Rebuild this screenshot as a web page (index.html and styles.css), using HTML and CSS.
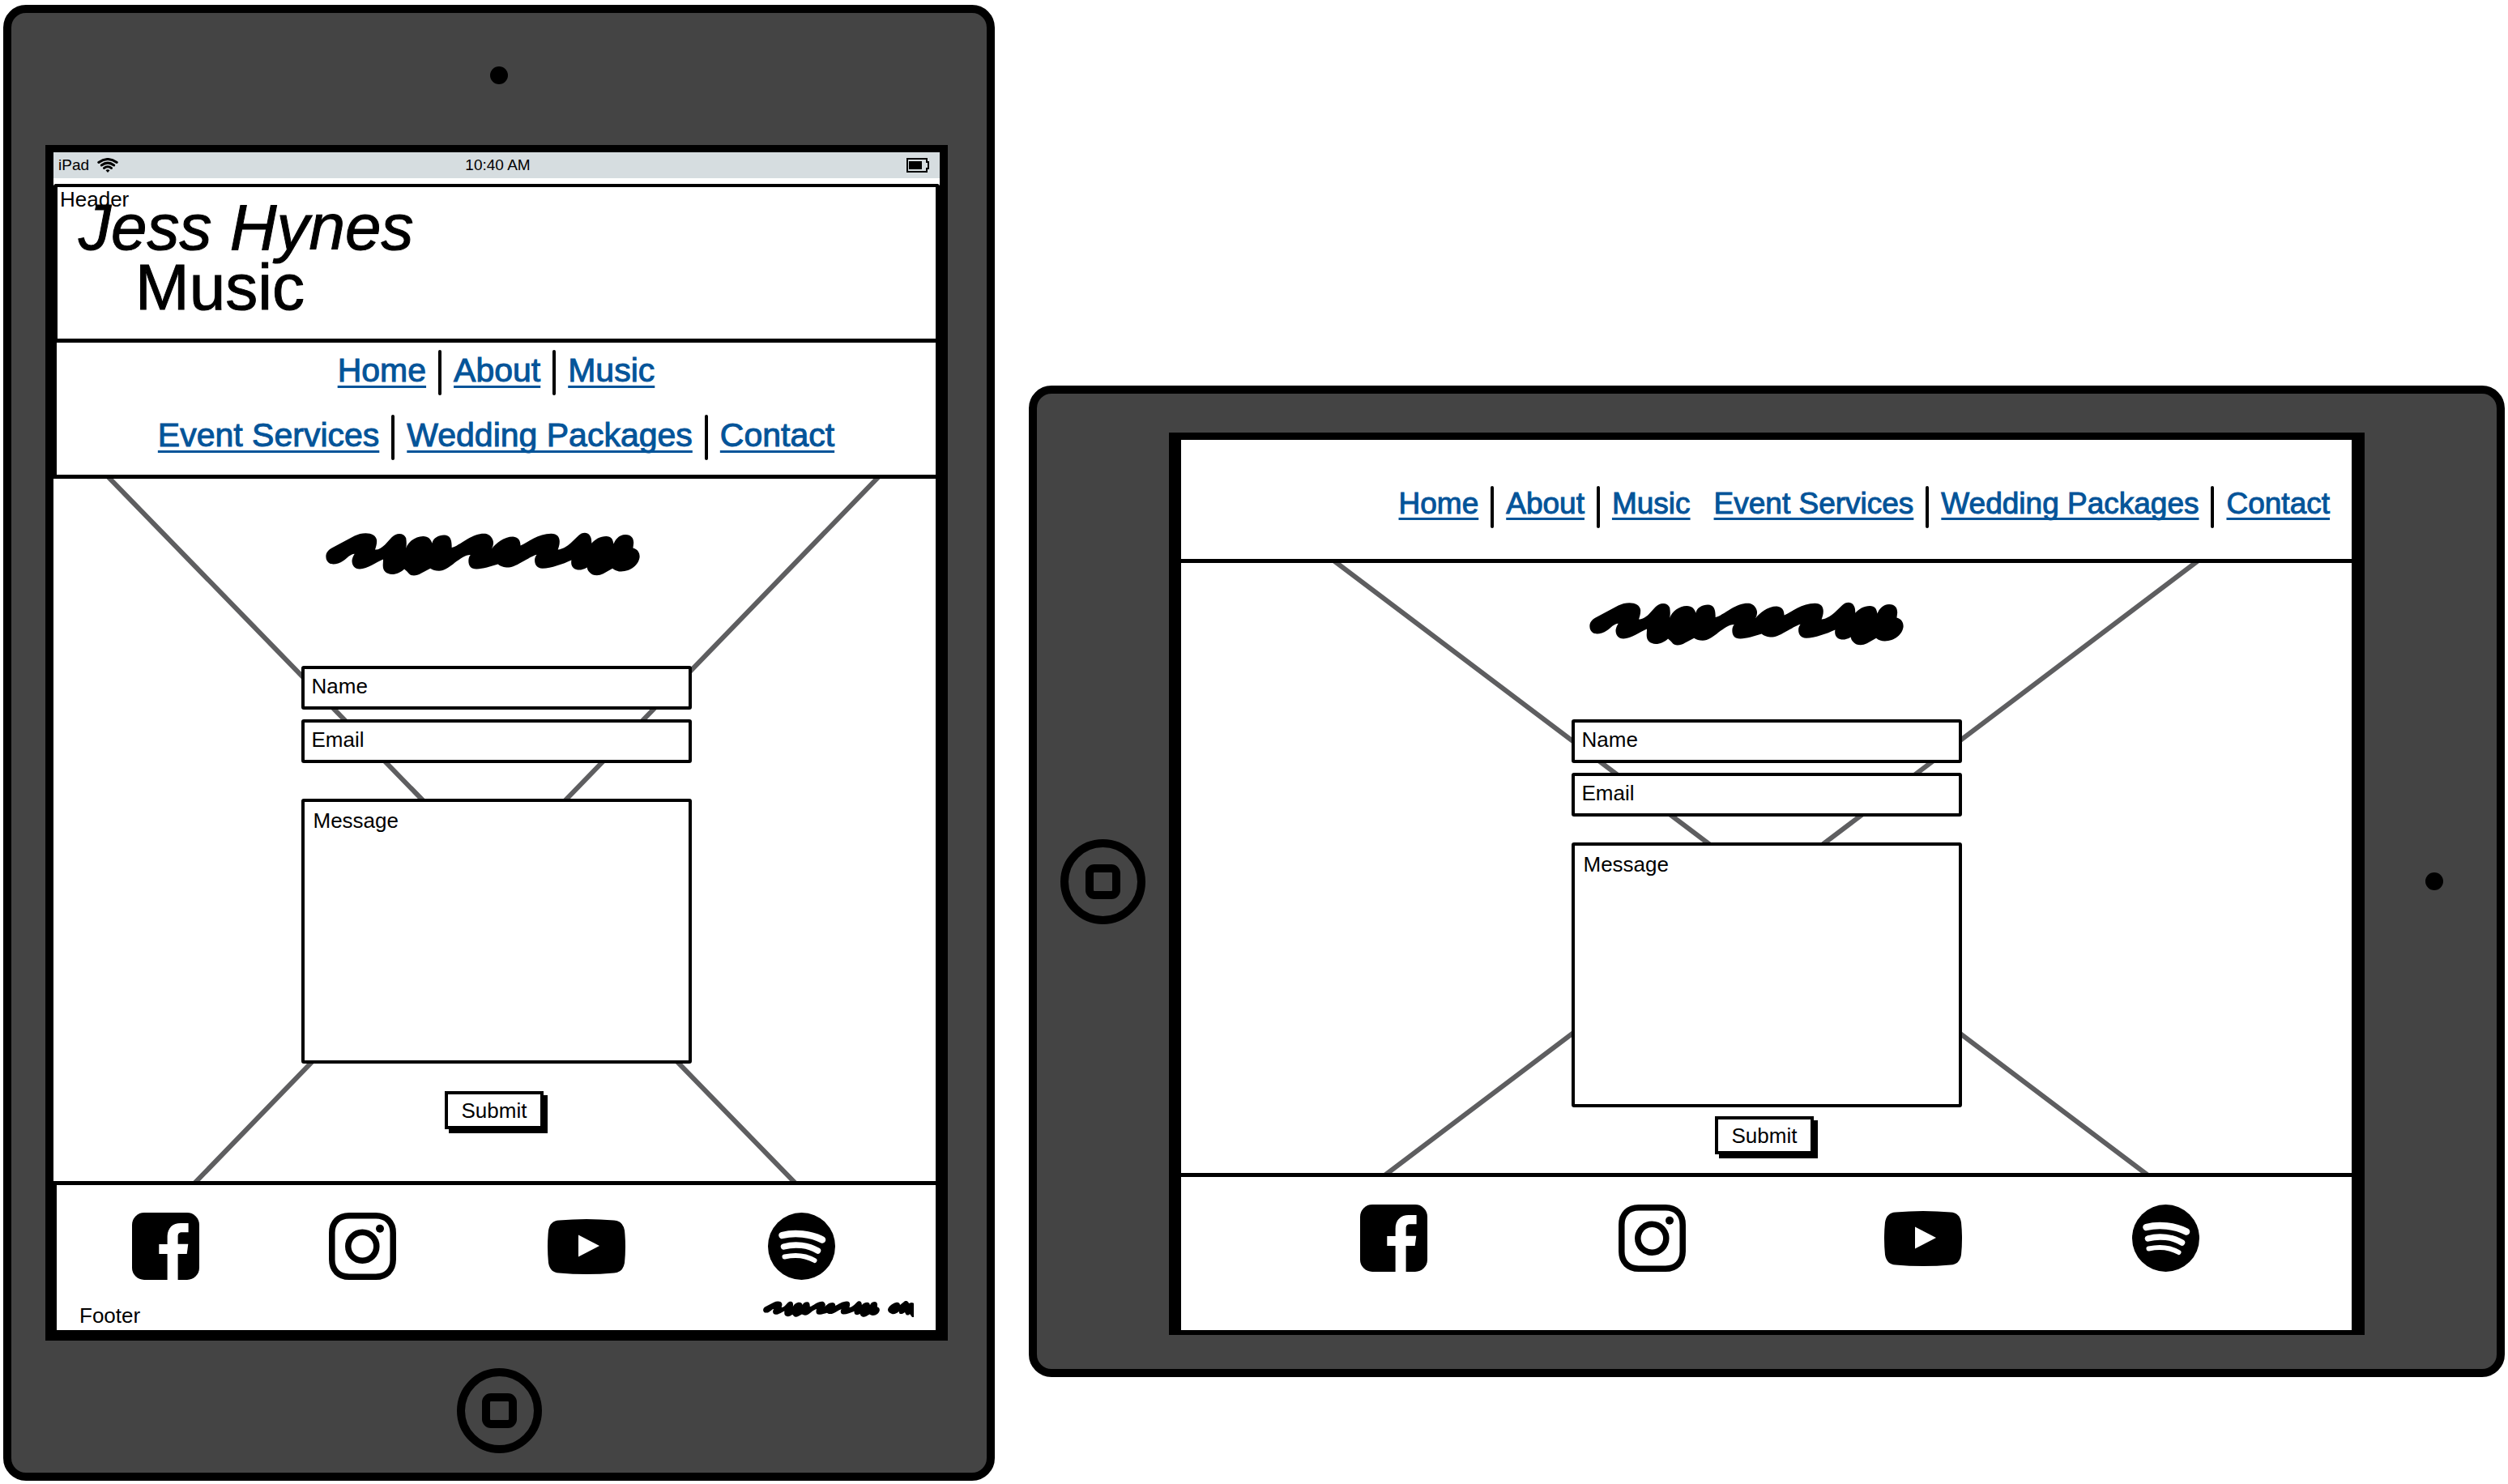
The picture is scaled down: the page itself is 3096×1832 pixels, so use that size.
FILE: index.html
```html
<!DOCTYPE html>
<html lang="en">
<head>
<meta charset="utf-8">
<title>Jess Hynes Music – Contact</title>
<link rel="stylesheet" href="styles.css">
</head>
<body>

<!-- Shared drawings -->
<svg class="defs" width="0" height="0" aria-hidden="true">
  <symbol id="scribble" viewBox="170 108 1087 164" preserveAspectRatio="none">
    <path d="M171 200C171 185 178 176 190 168L270 122C300 105 345 108 347 140C347 155 344 163 341 173C350 175 362 168 375 155L398 128C412 110 440 108 448 130C450 145 450 155 448 168C455 145 480 123 507 123C525 123 535 135 538 150C542 130 560 119 580 119C600 120 607 135 606 166C620 163 635 150 660 134C685 118 710 110 728 115C745 122 751 140 750 150C749 160 747 165 744 170C760 150 785 125 818 125C838 127 843 140 844 158C870 145 905 113 950 113C972 113 980 128 979 145C979 155 976 165 973 173C990 172 1005 160 1018 148L1045 120C1055 108 1075 106 1082 118C1090 130 1089 138 1090 150C1100 135 1120 123 1140 123C1158 124 1163 133 1166 152C1172 135 1185 117 1207 117C1228 117 1236 132 1235 150L1233 167C1250 172 1256 185 1256 200C1254 230 1225 255 1192 255C1180 255 1170 252 1162 244L1130 264C1110 275 1090 270 1080 255C1076 250 1075 245 1074 240C1055 252 1040 252 1028 243C1020 237 1018 225 1020 213C990 228 950 243 920 244C900 243 893 230 893 212C893 205 896 197 900 192C885 196 870 208 848 220C825 235 810 241 795 240C782 239 772 234 766 228C740 236 715 246 692 246C672 246 664 235 664 215C664 205 667 198 671 193C655 192 635 208 617 222C597 240 580 253 562 253C550 253 540 250 532 244L500 262C485 272 465 274 457 262C450 252 446 250 442 246C430 258 415 266 400 266C380 265 368 255 368 232L369 210C345 220 315 246 288 246C270 246 261 232 261 215C263 200 267 195 270 189C255 190 245 204 230 216C215 230 190 229 185 226C176 220 171 212 171 200Z"/>
  </symbol>
  <symbol id="facebook" viewBox="0 0 83 83">
    <rect width="83" height="83" rx="15"/>
    <path fill="#fff" d="M43.6 83V51H33.3V39H43.6V30C43.6 19 50 13 60 13H69.6V24.3H62C58 24.3 56.6 26 56.6 29V38.7H69.3L67.7 51H56.6V83Z"/>
  </symbol>
  <symbol id="instagram" viewBox="0 0 83 83">
    <path fill="none" stroke="#000" stroke-width="7.5" d="M25 3.8H58C71 3.8 79.2 12 79.2 25V58C79.2 71 71 79.2 58 79.2H25C12 79.2 3.8 71 3.8 58V25C3.8 12 12 3.8 25 3.8Z"/>
    <circle cx="41.3" cy="41.7" r="17.5" fill="none" stroke="#000" stroke-width="7.5"/>
    <circle cx="63" cy="19.7" r="5"/>
  </symbol>
  <symbol id="youtube" viewBox="0 0 96 68">
    <path d="M14 1.5Q48-1.500 82 1.500Q93 2 95 14Q97 34 95 54Q93 66 82 66.500Q48 69.500 14 66.500Q3 66 1 54Q-1 34 1 14Q3 2 14 1.500Z"/>
    <path fill="#fff" d="M38 19.500L64 33L38 46.500Z"/>
  </symbol>
  <symbol id="spotify" viewBox="0 0 83 83">
    <circle cx="41.500" cy="41.500" r="41.500"/>
    <g fill="none" stroke="#fff" stroke-linecap="round">
      <path stroke-width="8.500" d="M17.500 28C33 24 53 26 67 33.500"/>
      <path stroke-width="7.500" d="M19.500 42C34 38 50 40 61.500 47"/>
      <path stroke-width="6" d="M20.500 54.500C34 51.500 47 53 57.500 59"/>
    </g>
  </symbol>
</svg>

<section class="device device-portrait" aria-label="Portrait tablet">
  <div class="bezel bezel-camera"><span class="camera"></span></div>
  <div class="screen">
    <div class="status">
      <span class="carrier">iPad
        <svg width="26" height="18" viewBox="0 0 26 18" aria-hidden="true">
          <g fill="none" stroke="#000" stroke-width="3" stroke-linecap="round">
            <path d="M1.800 5.500Q13-2.500 24.200 5.500"/>
            <path d="M5.300 9Q13 3.300 20.700 9"/>
            <path d="M8.500 12.500Q13 9 17.500 12.500"/>
          </g>
          <path d="M10.500 15.200Q13 13.500 15.500 15.200L13 18Z"/>
        </svg>
      </span>
      <time>10:40 AM</time>
      <span class="battery">
        <svg width="28" height="18" viewBox="0 0 28 18" aria-hidden="true">
          <path fill="none" stroke="#000" stroke-width="2" d="M1 1H25V5H27V13H25V17H1Z"/>
          <rect x="3" y="4" width="16" height="10"/>
        </svg>
      </span>
    </div>
    <header class="masthead">
      <span class="region-label">Header</span>
      <h1 class="brand"><em>Jess Hynes</em><span class="brand-sub">Music</span></h1>
    </header>
    <nav class="menu menu-stacked" aria-label="Main">
      <ul>
        <li><a href="#home">Home</a></li>
        <li><a href="#about">About</a></li>
        <li><a href="#music">Music</a></li>
      </ul>
      <ul>
        <li><a href="#events">Event Services</a></li>
        <li><a href="#weddings">Wedding Packages</a></li>
        <li><a href="#contact">Contact</a></li>
      </ul>
    </nav>
    <main class="content">
      <svg class="cross" viewBox="0 0 1089 867" preserveAspectRatio="none" aria-hidden="true">
        <path d="M60-10L923 877M1026-10L167 877"/>
      </svg>
      <form class="contact">
        <svg class="heading" aria-hidden="true"><use href="#scribble"/></svg>
        <input type="text" placeholder="Name" aria-label="Name">
        <input type="email" placeholder="Email" aria-label="Email">
        <textarea placeholder="Message" aria-label="Message"></textarea>
        <button type="button">Submit</button>
      </form>
    </main>
    <footer class="footer">
      <div class="social">
        <a href="#facebook" aria-label="Facebook"><svg class="icon"><use href="#facebook"/></svg></a>
        <a href="#instagram" aria-label="Instagram"><svg class="icon"><use href="#instagram"/></svg></a>
        <a href="#youtube" aria-label="YouTube"><svg class="icon icon-wide"><use href="#youtube"/></svg></a>
        <a href="#spotify" aria-label="Spotify"><svg class="icon"><use href="#spotify"/></svg></a>
      </div>
      <div class="footnote">
        <span>Footer</span>
        <span class="credit">
          <svg width="144" height="20" aria-hidden="true"><use href="#scribble"/></svg>
          <svg width="32" height="20" viewBox="0 0 32 20" aria-hidden="true">
            <path d="M0 11C0 8 5 3 10 2C13 1 15 3 15 5L20 1C22-1 25 0 26 3L29 2C31 2 32 3 32 3V20H30L27 16C26 18 23 18 22 16L21 14C19 16 15 17 14 15V13C11 15 8 17 5 16C2 15 0 13 0 11Z"/>
          </svg>
        </span>
      </div>
    </footer>
  </div>
  <div class="bezel bezel-home"><button class="home" type="button" aria-label="Home button"></button></div>
</section>

<section class="device device-landscape" aria-label="Landscape tablet">
  <div class="bezel"><button class="home" type="button" aria-label="Home button"></button></div>
  <div class="screen">
    <nav class="menu menu-inline" aria-label="Main">
      <ul>
        <li><a href="#home">Home</a></li>
        <li><a href="#about">About</a></li>
        <li><a href="#music">Music</a></li>
      </ul>
      <ul>
        <li><a href="#events">Event Services</a></li>
        <li><a href="#weddings">Wedding Packages</a></li>
        <li><a href="#contact">Contact</a></li>
      </ul>
    </nav>
    <main class="content">
      <svg class="cross" viewBox="0 0 1445 753" preserveAspectRatio="none" aria-hidden="true">
        <path d="M179-10L1203 763M1265-10L242 763"/>
      </svg>
      <form class="contact">
        <svg class="heading" aria-hidden="true"><use href="#scribble"/></svg>
        <input type="text" placeholder="Name" aria-label="Name">
        <input type="email" placeholder="Email" aria-label="Email">
        <textarea placeholder="Message" aria-label="Message"></textarea>
        <button type="button">Submit</button>
      </form>
    </main>
    <footer class="footer">
      <div class="social">
        <a href="#facebook" aria-label="Facebook"><svg class="icon"><use href="#facebook"/></svg></a>
        <a href="#instagram" aria-label="Instagram"><svg class="icon"><use href="#instagram"/></svg></a>
        <a href="#youtube" aria-label="YouTube"><svg class="icon icon-wide"><use href="#youtube"/></svg></a>
        <a href="#spotify" aria-label="Spotify"><svg class="icon"><use href="#spotify"/></svg></a>
      </div>
    </footer>
  </div>
  <div class="bezel bezel-camera"><span class="camera"></span></div>
</section>

</body>
</html>
```
FILE: styles.css
```css
*, *::before { box-sizing: border-box; }

body {
  margin: 0;
  padding: 6px 4px 4px;
  display: grid;
  grid-template-columns: 1224fr 1822fr;
  gap: 42px;
  align-items: start;
  background: #fff;
  color: #000;
  font: 26px/30px "Liberation Sans", Arial, sans-serif;
}

svg { display: block; }
.defs { position: absolute; }

/* Tablets */
.device {
  display: grid;
  background: #444;
  border: 10px solid #000;
  border-radius: 28px;
}
.device-portrait { grid-template-rows: 163px auto 163px; }
.device-landscape {
  grid-template-columns: 163px 1fr 163px;
  align-self: end;
  margin-bottom: 128px;
}
.bezel { display: flex; align-items: center; justify-content: center; }
.device-portrait .bezel-camera { padding-bottom: 10px; }
.device-portrait .bezel-home { padding-top: 10px; }
.device-landscape .bezel-camera { padding-left: 8px; }
.camera { width: 22px; height: 22px; border-radius: 50%; background: #000; }
.home {
  width: 105px;
  height: 105px;
  padding: 0;
  display: grid;
  place-items: center;
  background: none;
  border: 10px solid #000;
  border-radius: 50%;
}
.home::before {
  content: "";
  width: 43px;
  height: 43px;
  border: 10px solid #000;
  border-radius: 11px;
}

.screen { background: #fff; border: 10px solid #000; border-top-width: 9px; }
.device-portrait .screen { margin: 0 48px 0 42px; border-bottom-width: 13px; }
.device-landscape .screen {
  margin: 48px 0 42px;
  border-width: 9px 16px 6px 15px;
}

/* Status bar */
.status {
  display: grid;
  grid-template-columns: 1fr auto 1fr;
  align-items: center;
  height: 32px;
  margin-bottom: 7px;
  padding: 0 13px 0 6px;
  background: #d6dde0;
  font-size: 19px;
  line-height: 28px;
}
.status time { padding-left: 10px; }
.carrier { display: flex; align-items: center; gap: 10px; }
.battery { justify-self: end; }

/* Header */
.masthead {
  position: relative;
  padding: 13px 26px 26px;
  border: solid #000;
  border-width: 4px 5px 0;
  border-radius: 4px 4px 0 0;
}
.region-label { position: absolute; top: 0; left: 3px; }
.brand {
  margin: 0;
  font-size: 80px;
  line-height: 74px;
  font-weight: 400;
  -webkit-text-stroke: 1px #000;
}
.brand em, .brand-sub { display: block; }
.brand-sub { padding-left: 70px; }

/* Menu */
.menu ul { display: flex; margin: 0; padding: 0; list-style: none; }
.menu li { display: flex; }
.menu li + li::before {
  content: "";
  width: 4px;
  margin: 0 15px;
  background: #000;
  border-radius: 2px;
}
.menu a {
  color: #045499;
  text-decoration: underline 3px;
  text-underline-offset: 5px;
  text-decoration-skip-ink: none;
  -webkit-text-stroke: 1px #045499;
}
.menu-stacked {
  display: flex;
  flex-direction: column;
  align-items: center;
  gap: 24px;
  padding: 9px 0 18px;
  border: solid #000;
  border-width: 5px 5px 5px 4px;
  font-size: 41px;
  line-height: 50px;
}
.menu-stacked li { height: 56px; }
.menu-inline {
  display: flex;
  justify-content: flex-end;
  gap: 29px;
  padding: 57px 27px 38px;
  border-bottom: 5px solid #000;
  font-size: 37px;
  line-height: 44px;
}
.menu-inline li { height: 52px; }

/* Contact form over the crossed image placeholder */
.content { position: relative; display: flex; justify-content: center; }
.device-portrait .content {
  padding: 66px 0 64px 4px;
  border-right: 5px solid #000;
}
.device-landscape .content { padding: 48px 0 23px; }
.cross { position: absolute; inset: 0; width: 100%; height: 100%; }
.cross path { stroke: #5e5e60; stroke-width: 6px; fill: none; }
.contact {
  position: relative;
  width: 482px;
  display: flex;
  flex-direction: column;
}
.heading { width: 388px; height: 54px; margin: 0 0 111px 30px; }
.contact input, .contact textarea {
  width: 100%;
  background: #fff;
  color: #000;
  border: 4px solid #000;
  border-radius: 3px;
  font: inherit;
}
.contact input { height: 54px; margin-bottom: 12px; padding: 0 9px 4px; }
.contact textarea {
  height: 327px;
  margin: 32px 0 34px;
  padding: 8px 11px;
  resize: none;
}
.contact ::placeholder { color: #000; opacity: 1; }
.contact button {
  align-self: center;
  height: 47px;
  margin-right: 5px;
  padding: 0 17px;
  background: #fff;
  color: #000;
  border: 4px solid #000;
  box-shadow: 5px 5px 0 #000;
  font: inherit;
}
.device-landscape .heading { margin: 0 0 91px 22px; }
.device-landscape textarea { margin: 20px 0 11px; }

/* Footer */
.footer { border-top: 5px solid #000; }
.device-portrait .footer { border-width: 5px 5px 0 4px; border-style: solid; border-color: #000; }
.social { display: grid; align-items: center; }
.device-portrait .social {
  grid-template-columns: 243fr 270fr 272fr 83px;
  padding: 34px 124px 0 93px;
}
.device-landscape .social {
  grid-template-columns: 319fr 328fr 306fr 83px;
  padding: 34px 188px 72px 221px;
}
.social a { color: #000; justify-self: start; }
.icon { width: 83px; height: 83px; }
.icon-wide { width: 96px; height: 68px; }
.footnote {
  display: flex;
  justify-content: space-between;
  align-items: flex-start;
  padding: 26px 27px 3px 28px;
}
.footnote > span:first-child { padding-top: 3px; }
.credit { display: flex; gap: 10px; }
```
